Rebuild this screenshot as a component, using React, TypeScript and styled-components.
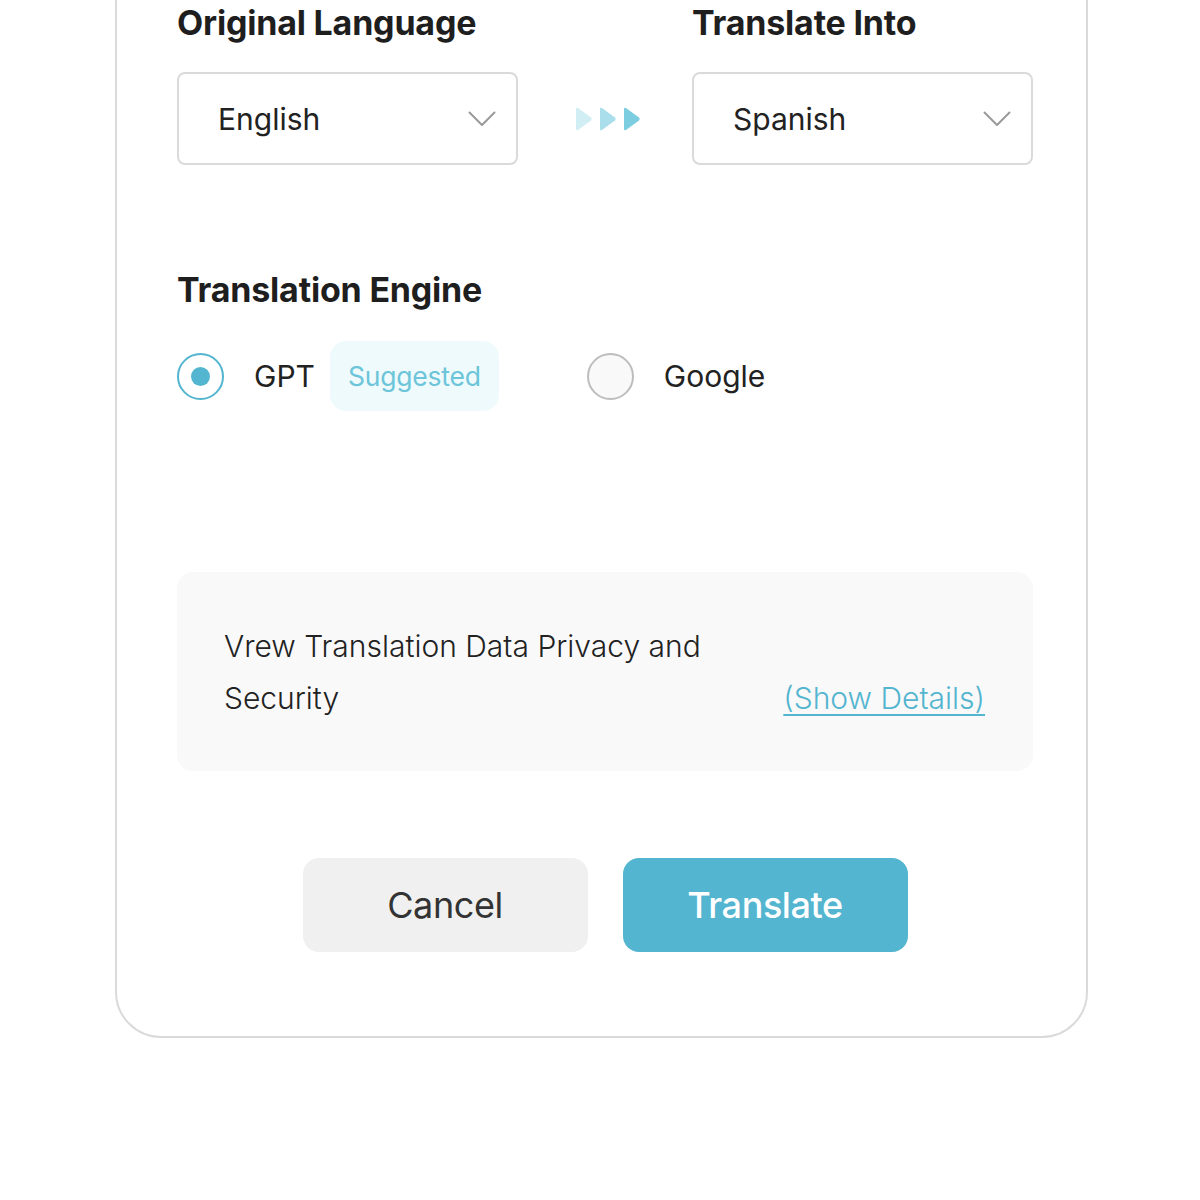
import React, { FC, useState } from "react"
import styled, { createGlobalStyle } from "styled-components"

const colors = {
  ink: "#1e1e1e",
  text: "#222222",
  teal: "#53b5cf",
  tealSoft: "#6cc5d9",
  tealBg: "#eefafc",
  border: "#dadada",
  panel: "#f9f9f9",
  muted: "#eff0ef",
}

const GlobalStyle = createGlobalStyle`
  html, body {
    margin: 0;
    padding: 0;
    background: #ffffff;
    font-family: Inter, "Noto Sans", "Liberation Sans", sans-serif;
  }
`

const Card = styled.div`
  box-sizing: border-box;
  width: 973px;
  margin: -40px 0 0 115px;
  padding: 40px 53px 84px 60px;
  border: 2px solid ${colors.border};
  border-radius: 0 0 46px 46px;
  background: #ffffff;
`

const LanguageGrid = styled.div`
  display: grid;
  grid-template-columns: 341px 1fr 341px;
  align-items: end;
`

const Field = styled.div`
  display: flex;
  flex-direction: column;
`

const Heading = styled.h2<{ $gap: number }>`
  margin: 0 0 ${(p) => p.$gap}px;
  font-size: 34px;
  font-weight: 700;
  letter-spacing: -0.2px;
  line-height: 41px;
  color: ${colors.ink};
`

const SelectBox = styled.div`
  box-sizing: border-box;
  height: 93px;
  display: flex;
  align-items: center;
  justify-content: space-between;
  padding: 0 20px 0 39px;
  border: 2px solid ${colors.border};
  border-radius: 8px;
  font-size: 30px;
  color: ${colors.text};
`

const ArrowCell = styled.div`
  height: 93px;
  display: flex;
  align-items: center;
  justify-content: center;
  padding-left: 5px;
`

const EngineSection = styled.section`
  margin-top: 104px;
`

const EngineRow = styled.div`
  display: flex;
  align-items: center;
  height: 70px;
`

const Option = styled.label`
  display: flex;
  align-items: center;
  gap: 30px;
  font-size: 30px;
  color: ${colors.text};
  cursor: pointer;
`

const Radio = styled.span<{ $on: boolean }>`
  box-sizing: border-box;
  width: 47px;
  height: 47px;
  border-radius: 50%;
  border: 2px solid ${(p) => (p.$on ? colors.teal : "#bdbdbd")};
  background: ${(p) => (p.$on ? "#ffffff" : colors.panel)};
  display: flex;
  align-items: center;
  justify-content: center;

  &::after {
    content: "";
    width: 19px;
    height: 19px;
    border-radius: 50%;
    background: ${colors.teal};
    display: ${(p) => (p.$on ? "block" : "none")};
  }
`

const Badge = styled.span`
  height: 70px;
  display: flex;
  align-items: center;
  margin: 0 88px 0 15px;
  padding: 0 18px;
  border-radius: 16px;
  background: ${colors.tealBg};
  color: ${colors.tealSoft};
  font-size: 26.5px;
  letter-spacing: -0.2px;
`

const PrivacyPanel = styled.div`
  box-sizing: border-box;
  height: 199px;
  margin-top: 161px;
  padding: 0 48px 0 47px;
  border-radius: 16px;
  background: ${colors.panel};
  display: flex;
  align-items: center;
`

const PrivacyInner = styled.div`
  flex: 1;
  display: flex;
  align-items: flex-end;
  justify-content: space-between;
  font-size: 30px;
  font-weight: 300;
  line-height: 52px;
  color: ${colors.text};
`

const PrivacyText = styled.p`
  margin: 0;
  width: 520px;
`

const DetailsLink = styled.a`
  color: ${colors.teal};
  text-decoration: underline;
  text-underline-offset: 5px;
  text-decoration-thickness: 2px;
`

const Actions = styled.div`
  display: flex;
  justify-content: center;
  gap: 35px;
  margin-top: 87px;
`

const Button = styled.button<{ $primary?: boolean }>`
  width: 285px;
  height: 94px;
  border: none;
  border-radius: 16px;
  font-family: inherit;
  font-size: 36px;
  font-weight: ${(p) => (p.$primary ? 500 : 400)};
  letter-spacing: -0.4px;
  background: ${(p) => (p.$primary ? colors.teal : colors.muted)};
  color: ${(p) => (p.$primary ? "#ffffff" : "#333333")};
  cursor: pointer;
`

const Chevron: FC = () => (
  <svg width="28" height="16" viewBox="0 0 28 16" fill="none">
    <path d="M1.5 1.5 L14 14 L26.5 1.5" stroke="#9a9a9a" strokeWidth="2" strokeLinecap="round" strokeLinejoin="round" />
  </svg>
)

const FlowArrows: FC = () => (
  <svg width="66" height="26" viewBox="0 0 66 26">
    {[0, 24, 48].map((x, i) => (
      <path
        key={x}
        d={`M${x + 1} 3 Q${x + 1} 1 ${x + 3} 2 L${x + 16} 11.5 Q${x + 17.5} 13 ${x + 16} 14.5 L${x + 3} 24 Q${x + 1} 25 ${x + 1} 23 Z`}
        fill="#7ccde0"
        opacity={[0.35, 0.65, 1][i]}
      />
    ))}
  </svg>
)

const LanguageSelect: FC<{ value: string }> = ({ value }) => (
  <SelectBox>
    <span>{value}</span>
    <Chevron />
  </SelectBox>
)

const App: FC = () => {
  const [engine, setEngine] = useState<"gpt" | "google">("gpt")

  return (
    <>
      <GlobalStyle />
      <Card>
        <LanguageGrid>
          <Field>
            <Heading $gap={29}>Original Language</Heading>
            <LanguageSelect value="English" />
          </Field>
          <ArrowCell>
            <FlowArrows />
          </ArrowCell>
          <Field>
            <Heading $gap={29}>Translate Into</Heading>
            <LanguageSelect value="Spanish" />
          </Field>
        </LanguageGrid>

        <EngineSection>
          <Heading $gap={31}>Translation Engine</Heading>
          <EngineRow>
            <Option onClick={() => setEngine("gpt")}>
              <Radio $on={engine === "gpt"} />
              GPT
            </Option>
            <Badge>Suggested</Badge>
            <Option onClick={() => setEngine("google")}>
              <Radio $on={engine === "google"} />
              Google
            </Option>
          </EngineRow>
        </EngineSection>

        <PrivacyPanel>
          <PrivacyInner>
            <PrivacyText>Vrew Translation Data Privacy and Security</PrivacyText>
            <DetailsLink href="#">(Show Details)</DetailsLink>
          </PrivacyInner>
        </PrivacyPanel>

        <Actions>
          <Button>Cancel</Button>
          <Button $primary>Translate</Button>
        </Actions>
      </Card>
    </>
  )
}

export default App
